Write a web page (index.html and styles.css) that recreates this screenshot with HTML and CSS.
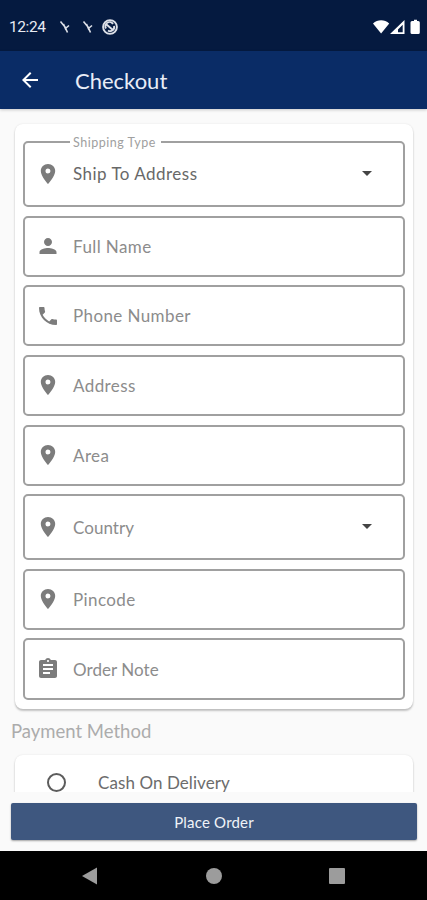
FILE: index.html
```
<!DOCTYPE html>
<html lang="en">
<head>
  <meta charset="UTF-8">
  <title>Checkout</title>
  <link rel="stylesheet" href="styles.css">
</head>
<body>
  <!-- shared icons -->
  <svg class="sprite">
    <symbol id="pin" viewBox="0 0 24 24"><path d="M12 2C8 2 4.800 5.100 4.800 9c0 5.300 7.200 13 7.200 13s7.200-7.700 7.200-13C19.200 5.100 16 2 12 2zm0 9.500a2.500 2.500 0 1 1 0-5 2.500 2.500 0 0 1 0 5z"/></symbol>
    <symbol id="person" viewBox="0 0 24 24"><path d="M12 12c2.210 0 4-1.790 4-4s-1.790-4-4-4-4 1.790-4 4 1.790 4 4 4zm0 2c-2.670 0-8.500 1.340-8.500 4v2h17v-2c0-2.660-5.830-4-8.500-4z"/></symbol>
    <symbol id="phone" viewBox="0 0 24 24"><path d="M6.620 10.790c1.440 2.830 3.760 5.140 6.590 6.590l2.200-2.200c.27-.27.67-.36 1.020-.24 1.120.37 2.330.57 3.570.57.55 0 1 .45 1 1V20c0 .55-.45 1-1 1-9.390 0-17-7.610-17-17 0-.55.45-1 1-1h3.500c.55 0 1 .45 1 1 0 1.250.2 2.450.57 3.570.11.35.03.74-.25 1.020l-2.200 2.200z"/></symbol>
    <symbol id="note" viewBox="0 0 24 24"><path d="M19 3h-4.180C14.400 1.840 13.300 1 12 1s-2.400.84-2.820 2H5c-1.100 0-2 .9-2 2v14c0 1.100.9 2 2 2h14c1.100 0 2-.9 2-2V5c0-1.100-.9-2-2-2zm-7 0c.55 0 1 .45 1 1s-.45 1-1 1-1-.45-1-1 .45-1 1-1zm2 14H7v-2h7v2zm3-4H7v-2h10v2zm0-4H7V7h10v2z"/></symbol>
  </svg>

  <div class="status-bar">
    <span class="time">12:24</span>
    <svg class="notif" viewBox="0 0 12 16"><path d="M1.500 2.500L6 8l2.500 5.500M7 9l3-2.500M4.500 5l2.500 6"/></svg>
    <svg class="notif" viewBox="0 0 12 16"><path d="M1.500 2.500L6 8l2.500 5.500M7 9l3-2.500M4.500 5l2.500 6"/></svg>
    <svg class="sync" viewBox="0 0 16 16"><circle cx="8" cy="8" r="6.900"/><path d="M4 9.500a4 4 0 0 1 7-4.500M4.500 5.500l7 6M12 7a4 4 0 0 1-6 4.500"/></svg>
    <svg class="system" viewBox="0 0 48 16">
      <path d="M0 4.500C4.500.3 11.700.3 16.200 4.500L8.100 14.500z"/>
      <path fill-rule="evenodd" d="M17 15L31.500 1v14zM25 13.200h4.700V5.800l-4.700 4.800z"/>
      <path d="M39 2h2V.8h3V2h1.300q1.500 0 1.500 1.500v10q0 1.500-1.500 1.500H39q-1.500 0-1.500-1.500v-10Q37.500 2 39 2z"/>
    </svg>
  </div>

  <header class="app-bar">
    <svg class="back" viewBox="0 0 24 24"><path d="M20 11H7.830l5.590-5.590L12 4l-8 8 8 8 1.410-1.410L7.830 13H20v-2z"/></svg>
    <h1>Checkout</h1>
  </header>

  <main class="content">
    <div class="card">
      <div class="field select">
        <span class="legend">Shipping Type</span>
        <svg class="icon"><use href="#pin"/></svg>
        <span class="value">Ship To Address</span>
        <span class="caret"></span>
      </div>
      <div class="field"><svg class="icon"><use href="#person"/></svg><span>Full Name</span></div>
      <div class="field"><svg class="icon"><use href="#phone"/></svg><span>Phone Number</span></div>
      <div class="field"><svg class="icon"><use href="#pin"/></svg><span>Address</span></div>
      <div class="field"><svg class="icon"><use href="#pin"/></svg><span>Area</span></div>
      <div class="field select tight"><svg class="icon"><use href="#pin"/></svg><span>Country</span><span class="caret"></span></div>
      <div class="field"><svg class="icon"><use href="#pin"/></svg><span>Pincode</span></div>
      <div class="field tight"><svg class="icon"><use href="#note"/></svg><span>Order Note</span></div>
    </div>

    <h2>Payment Method</h2>
    <div class="card payment">
      <span class="radio"></span>
      <span class="option">Cash On Delivery</span>
    </div>
  </main>

  <footer class="bottom">
    <button class="place-order">Place Order</button>
  </footer>

  <nav class="nav-bar">
    <svg viewBox="0 0 18 18"><path d="M1 9L16 .5v17z"/></svg>
    <svg viewBox="0 0 18 18"><circle cx="9" cy="9" r="8"/></svg>
    <svg viewBox="0 0 18 18"><rect x="1" y="1" width="16" height="16" rx="1"/></svg>
  </nav>
</body>
</html>
```
FILE: styles.css
```
* {
  box-sizing: border-box;
}
body {
  margin: 0;
  height: 900px;
  display: flex;
  flex-direction: column;
  overflow: hidden;
  font-family: Lato, sans-serif;
  background-color: #fafafa;
}
.sprite {
  display: none;
}
.status-bar {
  height: 51px;
  flex: none;
  display: flex;
  align-items: center;
  padding: 2px 6px 0 9px;
  background-color: #051a40;
  color: #e8ebf2;
}
.time {
  width: 50px;
  font-family: Roboto, sans-serif;
  font-size: 15.500px;
  letter-spacing: -0.400px;
}
.notif {
  width: 12px;
  height: 16px;
  margin-right: 11px;
  fill: none;
  stroke: #dde0e8;
  stroke-width: 1.600;
}
.sync {
  width: 16px;
  height: 16px;
  margin-left: -3px;
  fill: none;
  stroke: #dde0e8;
  stroke-width: 1.900;
}
.system {
  width: 48px;
  height: 16px;
  margin-left: auto;
  fill: #fff;
}
.app-bar {
  height: 58px;
  flex: none;
  display: flex;
  align-items: center;
  padding-left: 18px;
  background-color: #0a2c66;
  box-shadow: 0 1px 3px rgba(0,0,0,0.2);
  color: #e8edf7;
}
.back {
  width: 24px;
  height: 24px;
  margin-right: 33px;
  fill: #fff;
}
h1 {
  margin: 0;
  font-size: 22px;
  font-weight: 400;
}
.content {
  height: 683px;
  flex: none;
  padding: 15px 14px 0 15px;
  overflow: hidden;
}
.card {
  height: 585px;
  display: flex;
  flex-direction: column;
  gap: 8.500px;
  padding: 17px 8px 0;
  background-color: #fff;
  border-radius: 8px;
  box-shadow: 0 2px 2px rgba(0,0,0,0.22), 0 0 2px rgba(0,0,0,0.1);
}
.field {
  position: relative;
  height: 61.200px;
  flex: none;
  display: flex;
  align-items: center;
  padding-left: 11px;
  border: 2px solid #a0a0a0;
  border-radius: 5px;
  color: #8c8c8c;
  font-size: 17px;
  letter-spacing: 0.400px;
}
.select {
  height: 66px;
  padding-right: 31px;
}
.tight {
  letter-spacing: 0.050px;
}
.icon {
  width: 24px;
  height: 24px;
  margin-right: 13px;
  fill: #7c7c7c;
}
.legend {
  position: absolute;
  top: -8px;
  left: 45px;
  padding: 0 5px 0 3px;
  background-color: #fff;
  color: #a0a0a0;
  font-size: 12.500px;
  line-height: 16px;
  letter-spacing: 0.500px;
  white-space: nowrap;
}
.value {
  margin-top: -2px;
  color: #686868;
  letter-spacing: 0.480px;
}
.caret {
  margin-top: -1px;
  margin-left: auto;
  border: 5px solid transparent;
  border-top-color: #444;
  border-bottom: 0;
}
h2 {
  margin: 12px 0 13px -4px;
  color: #acacac;
  font-size: 18.500px;
  font-weight: 400;
  line-height: 21px;
}
.payment {
  height: 80px;
  flex-direction: row;
  gap: 32px;
  padding: 18px 32px;
  color: #6c6c6c;
  font-size: 17px;
}
.option {
  margin-top: -1px;
  letter-spacing: 0.080px;
}
.radio {
  width: 19px;
  height: 19px;
  border: 2px solid #5c5c5c;
  border-radius: 50%;
}
.bottom {
  height: 59px;
  flex: none;
  padding: 11px 10px 0 11px;
}
.place-order {
  display: block;
  width: 100%;
  height: 37px;
  border: none;
  border-radius: 2px;
  background-color: #3e577f;
  box-shadow: 0 1px 2px rgba(0,0,0,0.35);
  color: #f0f3f8;
  font-family: Lato, sans-serif;
  font-size: 15px;
  letter-spacing: 0.200px;
}
.nav-bar {
  height: 49px;
  flex: none;
  display: flex;
  justify-content: space-between;
  align-items: center;
  padding: 0 81px;
  background-color: #000;
}
.nav-bar svg {
  width: 18px;
  height: 18px;
  fill: #9c9c9c;
}
```
